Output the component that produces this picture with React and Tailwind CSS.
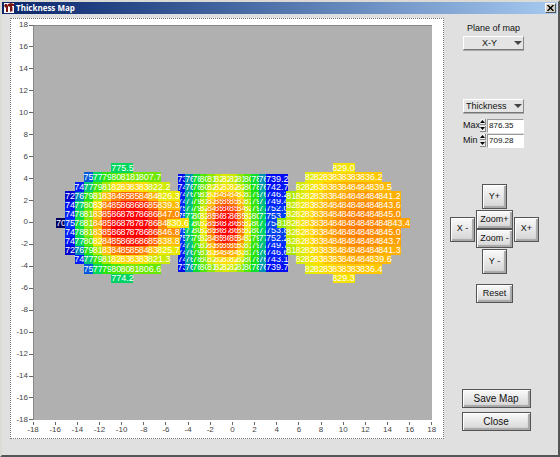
import { useState } from "react";

const TICKS = [18, 16, 14, 12, 10, 8, 6, 4, 2, 0, -2, -4, -6, -8, -10, -12, -14, -16, -18];
const RANGE = 18;

// colour scale of the map, by thickness
const STOPS = [
  [709, [0, 0, 96]],
  [735, [0, 0, 235]],
  [750, [0, 40, 255]],
  [758, [0, 95, 215]],
  [766, [0, 160, 165]],
  [775, [0, 215, 95]],
  [788, [20, 225, 20]],
  [804, [90, 232, 0]],
  [815, [150, 232, 0]],
  [824, [225, 235, 0]],
  [832, [255, 222, 0]],
  [841, [255, 178, 0]],
  [850, [255, 120, 0]],
  [860, [255, 55, 0]],
  [868, [255, 0, 0]],
];

// one row per scan line, top to bottom, each one centred on the disc
const LEFT = [
  [775.5],
  [757.1, 776.4, 793.2, 801.4, 810.3, 811.2, 807.7],
  [745.6, 772.4, 798.1, 817.2, 829.4, 834.3, 834.1, 831.2, 822.2],
  [729.6, 763.3, 792.2, 818.1, 838.6, 848.3, 853.4, 852.2, 848.1, 840.3, 826.3],
  [741.2, 774.1, 803.2, 830.3, 848.4, 859.1, 864.2, 866.1, 862.4, 853.2, 839.3],
  [747.3, 780.4, 812.1, 838.6, 857.2, 868.1, 873.4, 874.2, 869.4, 861.2, 847.0],
  [709.3, 752.4, 783.1, 814.2, 842.3, 859.4, 869.1, 875.2, 876.3, 871.4, 862.2, 847.3, 830.6],
  [747.1, 780.2, 812.4, 838.2, 857.4, 868.3, 873.1, 874.4, 869.2, 861.1, 846.8],
  [741.4, 774.3, 803.1, 829.6, 848.2, 859.3, 864.4, 865.8, 862.1, 853.4, 838.8],
  [729.4, 763.1, 792.4, 817.8, 838.3, 848.1, 853.2, 851.8, 847.6, 838.4, 825.7],
  [745.3, 772.1, 797.8, 816.8, 828.9, 833.8, 833.6, 830.4, 821.3],
  [756.8, 776.1, 792.8, 800.9, 808.8, 810.4, 806.6],
  [774.2],
];

const RIGHT = [
  [829.0],
  [824.1, 828.2, 832.3, 834.4, 835.8, 836.7, 836.2],
  [822.3, 827.4, 832.1, 836.3, 839.2, 840.8, 842.1, 841.6, 839.5],
  [817.2, 823.1, 828.9, 834.2, 838.7, 841.4, 843.6, 844.9, 845.1, 843.8, 841.2],
  [820.3, 826.4, 832.1, 837.2, 841.3, 844.1, 846.2, 847.4, 847.3, 846.1, 843.6],
  [821.4, 827.3, 833.4, 838.8, 843.1, 846.2, 848.3, 849.2, 848.8, 847.4, 845.0],
  [813.6, 821.2, 828.3, 834.4, 839.4, 843.2, 846.4, 848.6, 849.4, 849.1, 848.2, 846.1, 843.4],
  [821.2, 827.1, 833.2, 838.6, 843.0, 846.1, 848.2, 849.1, 848.7, 847.3, 845.0],
  [820.1, 826.2, 832.4, 837.3, 841.4, 844.2, 846.3, 847.5, 847.4, 846.2, 843.7],
  [817.3, 823.2, 829.1, 834.4, 838.9, 841.6, 843.8, 845.1, 845.2, 843.9, 841.3],
  [822.4, 827.6, 832.2, 836.4, 839.4, 841.1, 842.3, 841.8, 839.6],
  [824.3, 828.4, 832.4, 834.6, 836.1, 836.9, 836.4],
  [829.3],
];

// the middle disc is symmetric, so only the first half of each profile is kept
const PROFILES = [
  [738.6, 764.2, 783.1, 801.4, 813.2, 820.6, 823.4],
  [742.1, 766.4, 788.3, 808.2, 822.4, 829.3, 832.1],
  [745.8, 768.9, 792.4, 813.6, 831.2, 840.4, 843.2],
  [749.1, 770.3, 795.2, 818.4, 839.1, 850.3, 854.6],
  [751.6, 772.4, 798.3, 822.1, 845.4, 859.2, 864.3],
  [753.4, 774.1, 800.2, 825.3, 850.1, 864.4, 870.2],
  [754.2, 775.2, 802.1, 828.4, 853.2, 868.1, 874.3],
];
const MIDDLE_ENDS = [739.2, 742.7, 746.2, 749.4, 752.0, 753.7, 754.6, 753.8, 752.2, 749.7, 746.6, 743.1, 739.7];
const MIDDLE = MIDDLE_ENDS.map((end, i) => {
  const half = PROFILES[i < 7 ? i : 12 - i];
  return [...half, ...half.slice(1, 6).reverse(), end];
});

function colorOf(v) {
  const i = STOPS.findIndex(([s]) => s > v);
  if (i === 0) return "rgb(0, 0, 96)";
  if (i < 0) return "rgb(255, 0, 0)";
  const [a, ca] = STOPS[i - 1];
  const [b, cb] = STOPS[i];
  const t = (v - a) / (b - a);
  return `rgb(${ca.map((c, k) => Math.round(c + (cb[k] - c) * t)).join(", ")})`;
}

// upper rows are painted over the lower ones
function scan(rows, cx, step) {
  return rows
    .flatMap((row, r) =>
      row.map((v, i) => ({ v, x: cx + (i - (row.length - 1) / 2) * step, y: ((rows.length - 1) / 2 - r) * step, r }))
    )
    .sort((a, b) => b.r - a.r || a.x - b.x);
}

const POINTS = [
  ...scan(MIDDLE, 0, 2 / 3),
  ...scan(LEFT, -10, 5 / 6),
  ...scan(RIGHT, 10, 5 / 6),
];

const BEVEL =
  "border border-[#555] bg-linear-to-b from-[#fafafa] to-[#d4d4d4] text-[#111] shadow-[inset_1px_1px_0_#fff,inset_-2px_-2px_1px_#a8a8a8] flex items-center justify-center whitespace-nowrap";

function PushButton({ className, children, onClick }) {
  return (
    <button type="button" onClick={onClick} className={`${BEVEL} ${className}`}>
      {children}
    </button>
  );
}

function Dropdown({ label, options, className }) {
  return (
    <div className="relative w-[61px]">
      <select
        aria-label={label}
        className={`block h-[14px] w-full appearance-none border border-t-white border-l-white border-r-[#888] border-b-[#777] bg-[#e4e4e4] pr-2 text-[9px] leading-[12px] shadow-[0_1px_0_#aaa] outline-none ${className}`}
      >
        {options.map((o) => <option key={o}>{o}</option>)}
      </select>
      <svg className="pointer-events-none absolute top-[5px] right-[2px]" width="8" height="4" viewBox="0 0 8 4">
        <path d="M0 0h8L4 4z" fill="#444" />
      </svg>
    </div>
  );
}

function NumberBox({ id, label, value, step }) {
  const [val, setVal] = useState(value);
  const nudge = (d) => setVal((v) => (Number(v) + d * step).toFixed(2));
  return (
    <div className="flex h-[15px] items-center">
      <label htmlFor={id} className="w-[17px] text-[9px]">{label}</label>
      <div className="flex w-[6px] flex-col gap-px">
        <button type="button" aria-label={`${label} up`} onClick={() => nudge(1)} className="flex h-[6px] items-center justify-center border-r border-b border-[#888] bg-[#eee]">
          <svg width="5" height="3" viewBox="0 0 5 3"><path d="M0 3h5L2.500 0z" fill="#000" /></svg>
        </button>
        <button type="button" aria-label={`${label} down`} onClick={() => nudge(-1)} className="flex h-[6px] items-center justify-center border-r border-b border-[#888] bg-[#eee]">
          <svg width="5" height="3" viewBox="0 0 5 3"><path d="M0 0h5L2.500 3z" fill="#000" /></svg>
        </button>
      </div>
      <input
        id={id}
        value={val}
        onChange={(e) => setVal(e.target.value)}
        className="ml-px h-[14px] w-[37px] border border-t-[#999] border-l-[#999] border-r-white border-b-white bg-white px-px text-[8px] outline-none"
      />
    </div>
  );
}

function ThicknessPlot() {
  return (
    <div className="flex flex-1 flex-col border border-dotted border-[#777] bg-white pt-[6px] pr-[11px] text-[8px] text-[#444]">
      <div className="flex flex-1">
        <div className="-my-1 flex w-[22px] flex-col justify-between">
          {TICKS.map((t) => (
            <div key={t} className="flex h-2 items-center justify-end gap-px leading-[8px]">
              {t}
              <span className="h-px w-[4px] bg-[#666]" />
            </div>
          ))}
        </div>
        <div className="relative flex-1 border-t border-l border-[#888] bg-[#b0b0b0]">
          {POINTS.map((p, i) => (
            <span
              key={i}
              className="absolute flex h-[10px] w-[22px] -translate-x-1/2 -translate-y-1/2 items-center justify-center text-[9px] leading-[10px] text-white"
              style={{
                left: `${((p.x + RANGE) / (2 * RANGE)) * 100}%`,
                top: `${((RANGE - p.y) / (2 * RANGE)) * 100}%`,
                backgroundColor: colorOf(p.v),
              }}
            >
              {p.v.toFixed(1)}
            </span>
          ))}
        </div>
      </div>
      <div className="-mr-2 ml-[14px] flex h-[18px] justify-between pt-[2px]">
        {[...TICKS].reverse().map((t) => (
          <div key={t} className="flex w-4 flex-col items-center gap-px leading-[8px]">
            <span className="h-[3px] w-px bg-[#666]" />
            {t}
          </div>
        ))}
      </div>
    </div>
  );
}

export default function App() {
  return (
    <div className="flex min-h-screen flex-col border-2 border-t-[#dcdad5] border-r-[#555] border-b-[#555] border-l-[#dcdad5] bg-[#e0e0e0] font-['Liberation_Sans',Arial,sans-serif] text-[#111]">
      <div className="mr-px flex h-3 items-center bg-linear-to-r from-[#0a246a] to-[#a6caf0] pr-px pl-[2px]">
        <svg width="10" height="10" viewBox="0 0 10 10">
          <rect width="10" height="10" fill="#fff" />
          <path d="M0 3l1-2 2 0 1 2v6H2V5L1 4zM4 1l3-1 3 1v2L8 3v5L6 9V4L4 3z" fill="#7d1414" />
          <path d="M9 4v4l-1 1V4z" fill="#c98a8a" />
        </svg>
        <h1 className="ml-[2px] flex-1 text-[8px] leading-[12px] font-bold text-white font-['Open_Sans',sans-serif]">Thickness Map</h1>
        <button type="button" aria-label="Close window" className="flex h-[10px] w-[11px] items-center justify-center border border-t-white border-l-white border-r-[#555] border-b-[#555] bg-[#d4d0c8]">
          <svg width="7" height="6" viewBox="0 0 7 6"><path d="M0.500 0l6 6M6.500 0l-6 6" stroke="#000" strokeWidth="1.400" /></svg>
        </button>
      </div>

      <div className="flex flex-1">
        <div className="flex flex-1 pt-1 pb-4 pl-2">
          <ThicknessPlot />
        </div>

        <div className="flex w-[114px] flex-col items-center pt-2 pr-[19px] pb-6 pl-[6px]">
          <div className="flex flex-col items-center pr-[2px]">
            <p className="text-[9px] leading-[12px]">Plane of map</p>
            <div className="mt-[2px]">
              <Dropdown label="Plane of map" options={["X-Y", "X-Z", "Y-Z"]} className="text-center" />
            </div>
            <div className="mt-[49px]">
              <Dropdown label="Quantity" options={["Thickness", "Bow"]} className="pl-[2px]" />
            </div>
            <div className="mt-[5px]">
              <NumberBox id="max" label="Max" value="876.35" step={1} />
              <NumberBox id="min" label="Min" value="709.28" step={1} />
            </div>
          </div>

          {/* Pan and zoom */}
          <div className="mt-9 flex flex-col items-center text-[9px]">
            <PushButton className="h-[25px] w-[25px]">Y+</PushButton>
            <div className="my-px flex items-center gap-px">
              <PushButton className="h-[25px] w-[25px]">X -</PushButton>
              <div className="flex flex-col">
                <PushButton className="h-[19px] w-[37px]">Zoom+</PushButton>
                <PushButton className="h-[19px] w-[37px]">Zoom -</PushButton>
              </div>
              <PushButton className="h-[25px] w-[25px]">X+</PushButton>
            </div>
            <PushButton className="h-[25px] w-[25px]">Y -</PushButton>
            <PushButton className="mt-[10px] h-[19px] w-[37px]">Reset</PushButton>
          </div>

          <div className="mt-auto flex flex-col gap-1 pl-[3px] text-[10px]">
            <PushButton className="h-[19px] w-[69px]">Save Map</PushButton>
            <PushButton className="h-[19px] w-[69px]">Close</PushButton>
          </div>
        </div>
      </div>
    </div>
  );
}
